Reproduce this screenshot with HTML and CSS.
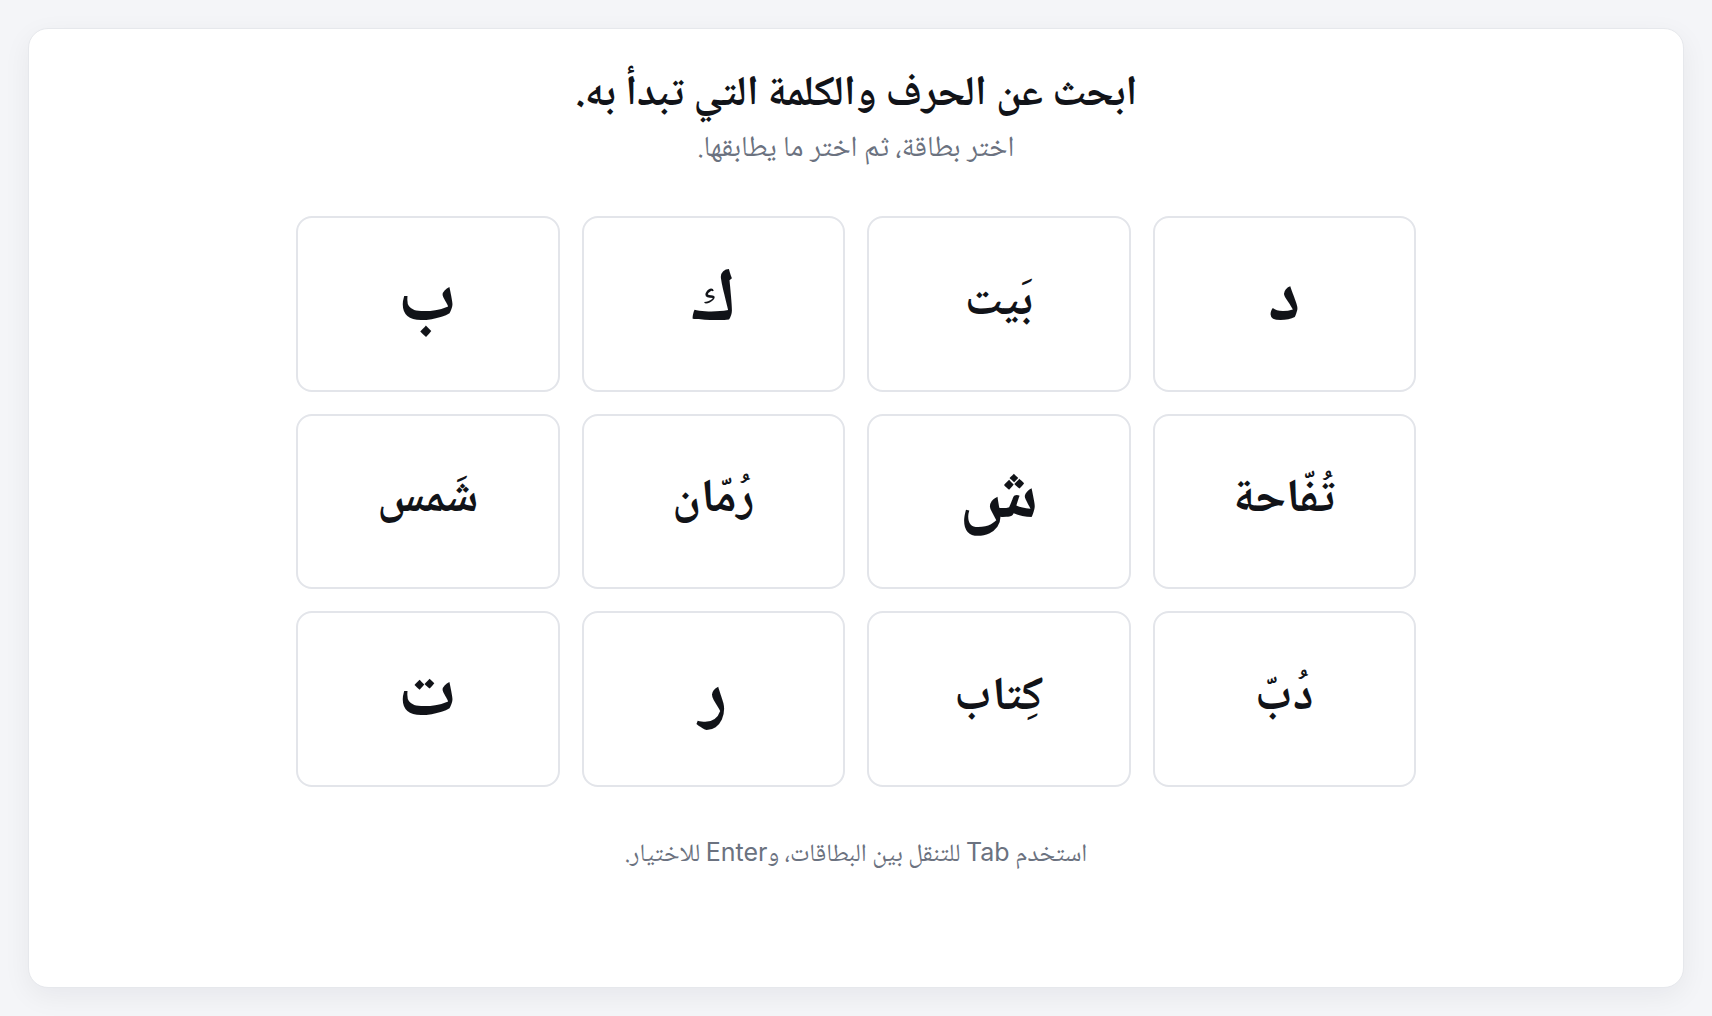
FILE: index.html
```html
<!DOCTYPE html>
<html lang="ar" dir="rtl">
<head>
    <meta charset="UTF-8">
    <title>الحروف والكلمات</title>
    <link rel="stylesheet" href="styles.css">
</head>
<body>
<div class="panel">
    <h1 class="title">ابحث عن الحرف والكلمة التي تبدأ به.</h1>
    <p class="subtitle">اختر بطاقة، ثم اختر ما يطابقها.</p>

    <div class="grid">
        <button class="card letter">د</button>
        <button class="card word">بَيت</button>
        <button class="card letter">ك</button>
        <button class="card letter">ب</button>

        <button class="card word">تُفّاحة</button>
        <button class="card letter">ش</button>
        <button class="card word">رُمّان</button>
        <button class="card word">شَمس</button>

        <button class="card word">دُبّ</button>
        <button class="card word">كِتاب</button>
        <button class="card letter">ر</button>
        <button class="card letter">ت</button>
    </div>

    <p class="hint">استخدم <span class="key">Tab</span> للتنقل بين البطاقات، و<span class="key">Enter</span> للاختيار.</p>
</div>
</body>
</html>
```

FILE: styles.css
```css
*{
    margin: 0;
    padding: 0;
    box-sizing: border-box;
}
html, body{
    height: 100%;
}
body{
    background-color: #f4f5f8;
    padding: 28px;
    font-family: "Noto Naskh Arabic", "Noto Sans Arabic", sans-serif;
    color: #111318;
}
.panel{
    height: 100%;
    background-color: #fff;
    border: 1px solid #e6e8ec;
    border-radius: 20px;
    box-shadow: 0 8px 28px rgba(20, 24, 40, 0.06);
    padding: 41px 40px;
    text-align: center;
}
.title{
    font-size: 42px;
    font-weight: 700;
    line-height: 52px;
}
.subtitle{
    margin-top: 9px;
    font-size: 29px;
    line-height: 38px;
    color: #6b7280;
}
.grid{
    display: grid;
    grid-template-columns: repeat(4, 1fr);
    gap: 22px;
    max-width: 1120px;
    margin: 47px auto 0;
}
.card{
    aspect-ratio: 3 / 2;
    display: flex;
    align-items: center;
    justify-content: center;
    background-color: #fff;
    border: 2px solid #e3e5ea;
    border-radius: 16px;
    font-family: inherit;
    font-weight: 700;
    color: #111318;
    cursor: pointer;
}
.card.letter{
    font-size: 75px;
}
.card.word{
    font-size: 47px;
}
.hint{
    margin-top: 48px;
    font-size: 25px;
    line-height: 34px;
    color: #6b7280;
}
.key{
    font-family: Inter, sans-serif;
}
```
